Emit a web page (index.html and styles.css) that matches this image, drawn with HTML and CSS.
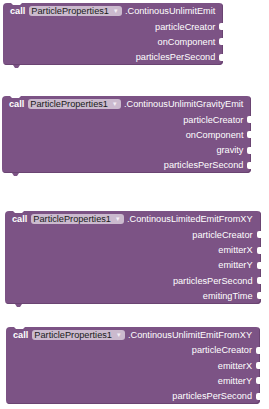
FILE: index.html
```html
<!DOCTYPE html>
<html>

<head>
  <title>ParticleProperties blocks</title>
  <link rel="stylesheet" href="styles.css">
</head>

<body>
  <div class="workspace">

    <div class="block block-1">
      <div class="head">
        <span class="call">call</span>
        <span class="dropdown">ParticleProperties1<span class="arrow">▾</span></span>
        <span class="method">.ContinousUnlimitEmit</span>
      </div>
      <div class="arg">particleCreator<span class="socket"></span></div>
      <div class="arg">onComponent<span class="socket"></span></div>
      <div class="arg">particlesPerSecond<span class="socket"></span></div>
    </div>

    <div class="block block-2">
      <div class="head">
        <span class="call">call</span>
        <span class="dropdown">ParticleProperties1<span class="arrow">▾</span></span>
        <span class="method">.ContinousUnlimitGravityEmit</span>
      </div>
      <div class="arg">particleCreator<span class="socket"></span></div>
      <div class="arg">onComponent<span class="socket"></span></div>
      <div class="arg">gravity<span class="socket"></span></div>
      <div class="arg">particlesPerSecond<span class="socket"></span></div>
    </div>

    <div class="block block-3">
      <div class="head">
        <span class="call">call</span>
        <span class="dropdown">ParticleProperties1<span class="arrow">▾</span></span>
        <span class="method">.ContinousLimitedEmitFromXY</span>
      </div>
      <div class="arg">particleCreator<span class="socket"></span></div>
      <div class="arg">emitterX<span class="socket"></span></div>
      <div class="arg">emitterY<span class="socket"></span></div>
      <div class="arg">particlesPerSecond<span class="socket"></span></div>
      <div class="arg">emitingTime<span class="socket"></span></div>
    </div>

    <div class="block block-4">
      <div class="head">
        <span class="call">call</span>
        <span class="dropdown">ParticleProperties1<span class="arrow">▾</span></span>
        <span class="method">.ContinousUnlimitEmitFromXY</span>
      </div>
      <div class="arg">particleCreator<span class="socket"></span></div>
      <div class="arg">emitterX<span class="socket"></span></div>
      <div class="arg">emitterY<span class="socket"></span></div>
      <div class="arg">particlesPerSecond<span class="socket"></span></div>
    </div>

  </div>
</body>

</html>
```

FILE: styles.css
```css
body {
  margin: 0;
  padding: 0;
  background-color: #fff;
  font-family: "Liberation Sans", Arial, sans-serif;
  font-size: 9.2px;
  color: #fff;
}

.workspace {
  display: flex;
  flex-direction: column;
  align-items: flex-start;
}

.block {
  position: relative;
  display: flex;
  flex-direction: column;
  padding: 2px 0 0 0;
  background-color: #7c5385;
  border-radius: 4px;
  box-shadow: inset -1px -1px 0 #6a4472;
}

/* notch on top of the block */
.block::before {
  content: "";
  position: absolute;
  top: 0;
  left: 8px;
  width: 7px;
  height: 0;
  border-top: 2px solid #fff;
  border-left: 2px solid transparent;
  border-right: 2px solid transparent;
}

/* tab under the block */
.block::after {
  content: "";
  position: absolute;
  bottom: -3px;
  left: 10px;
  width: 3px;
  height: 0;
  border-top: 3px solid #7c5385;
  border-left: 2px solid transparent;
  border-right: 2px solid transparent;
}

.block-1 {
  margin: 3px 0 0 3px;
}

.block-2 {
  margin: 31px 0 0 2px;
}

.block-3 {
  margin: 38px 0 0 5px;
}

.block-4 {
  margin: 23px 0 0 6px;
}

.head {
  display: flex;
  align-items: center;
  height: 12px;
  padding: 0 8px 0 7px;
  margin-bottom: 2px;
  white-space: nowrap;
}

.call {
  font-weight: bold;
  margin-right: 4px;
}

.dropdown {
  display: flex;
  align-items: center;
  height: 10px;
  padding: 0 4px 0 2px;
  background-color: #cbbace;
  border-radius: 3px;
  color: #1a1a1a;
}

.arrow {
  margin-left: 5px;
  font-size: 7px;
  color: #f4eef5;
}

.method {
  margin-left: 3px;
}

.arg {
  display: flex;
  justify-content: flex-end;
  align-items: center;
  height: 15.3px;
  white-space: nowrap;
}

.socket {
  width: 4px;
  height: 7px;
  margin-left: 4px;
  background-color: #fff;
  border-radius: 2px 0 0 2px;
}
```
